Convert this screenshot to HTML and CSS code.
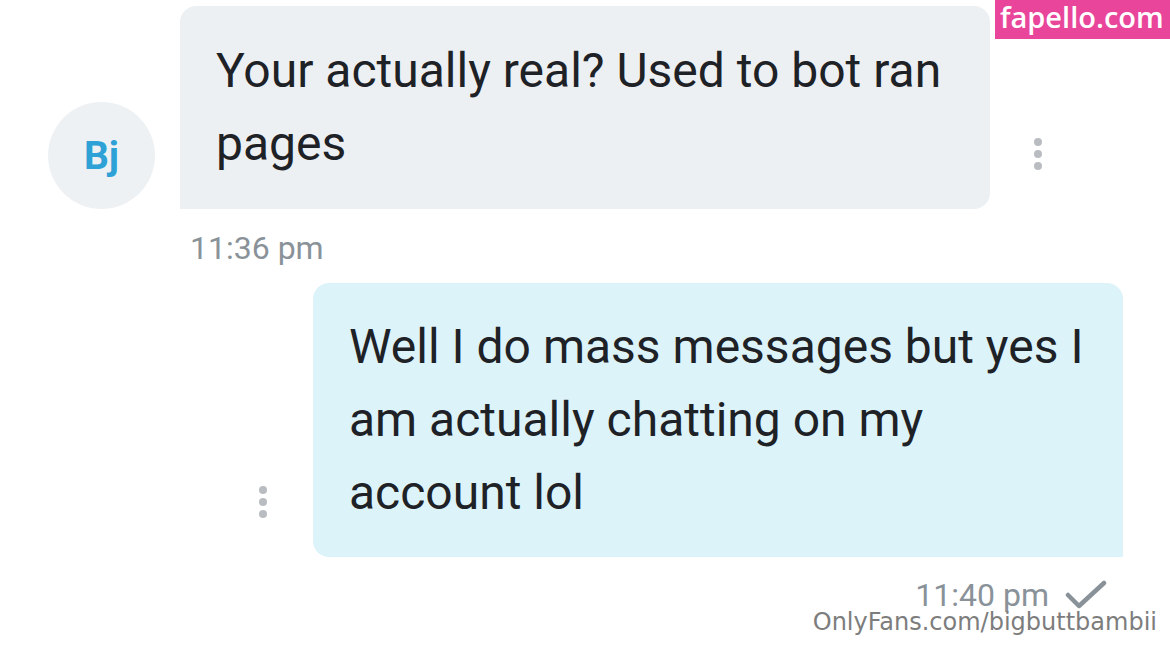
FILE: index.html
```html
<!DOCTYPE html>
<html lang="en">
<head>
    <meta charset="UTF-8">
    <meta name="viewport" content="width=device-width, initial-scale=1.0">
    <title>Chat</title>
    <link rel="stylesheet" href="styles.css">
</head>
<body>
    <div class="chat">
        <div class="row received">
            <div class="avatar">Bj</div>
            <div class="bubble in">Your actually real? Used to bot ran pages</div>
            <div class="menu"><span></span><span></span><span></span></div>
        </div>
        <div class="time in-time">11:36 pm</div>

        <div class="row sent">
            <div class="menu"><span></span><span></span><span></span></div>
            <div class="bubble out">Well I do mass messages but yes I am actually chatting on my account lol</div>
        </div>
        <div class="time out-time">
            11:40 pm
            <svg class="check" width="42" height="30" viewBox="0 0 42 30">
                <path d="M3 15 L14 26 L39 3" fill="none" stroke="#8a9299" stroke-width="4.5" stroke-linecap="round" stroke-linejoin="round"/>
            </svg>
        </div>
    </div>

    <div class="wm-top"><span>fapello.com</span></div>
    <div class="wm-bottom">OnlyFans.com/bigbuttbambii</div>
</body>
</html>
```

FILE: styles.css
```css
body {
    margin: 0;
    background: #fff;
    font-family: Roboto, "Noto Sans", sans-serif;
    color: #1e2226;
    width: 1170px;
    height: 651px;
    overflow: hidden;
}
.chat {
    padding-top: 6px;
}
.row {
    display: flex;
    align-items: flex-end;
}
.avatar {
    width: 107px;
    height: 107px;
    margin-left: 48px;
    margin-right: 25px;
    border-radius: 50%;
    background: #eef1f3;
    color: #2ea2d6;
    font-weight: bold;
    font-size: 39px;
    display: flex;
    align-items: center;
    justify-content: center;
}
.bubble {
    box-sizing: border-box;
    width: 810px;
    font-size: 48px;
    line-height: 73px;
    padding-left: 36px;
    padding-right: 30px;
}
.in {
    background: #edf0f2;
    border-radius: 16px 16px 16px 0;
    padding-top: 28px;
    padding-bottom: 29px;
}
.out {
    background: #dcf3fa;
    border-radius: 16px 16px 0 16px;
    padding-top: 27px;
    padding-bottom: 28px;
}
.menu {
    display: flex;
    flex-direction: column;
    gap: 4px;
    width: 8px;
    margin-bottom: 39px;
}
.menu span {
    width: 8px;
    height: 8px;
    border-radius: 50%;
    background: #b9bdc1;
}
.received .menu {
    margin-left: 44px;
}
.sent {
    margin-top: 16px;
}
.sent .menu {
    margin-left: 259px;
    margin-right: 46px;
}
.time {
    color: #8a9299;
    font-size: 32px;
}
.in-time {
    padding-left: 190px;
    margin-top: 20px;
}
.out-time {
    display: flex;
    justify-content: flex-end;
    align-items: center;
    gap: 16px;
    padding-right: 63px;
    margin-top: 19px;
}
.wm-top {
    position: absolute;
    top: 0;
    right: 0;
    box-sizing: border-box;
    width: 175px;
    height: 39px;
    padding: 0 6px 0 5px;
    background: #e8459b;
    color: #fff;
    font-family: "Open Sans", sans-serif;
    font-weight: 600;
    font-size: 29px;
    line-height: 34px;
    white-space: nowrap;
}
.wm-bottom {
    position: absolute;
    top: 608px;
    right: 13px;
    color: #7d7d7d;
    font-family: "DejaVu Sans", sans-serif;
    font-size: 24px;
}
```
